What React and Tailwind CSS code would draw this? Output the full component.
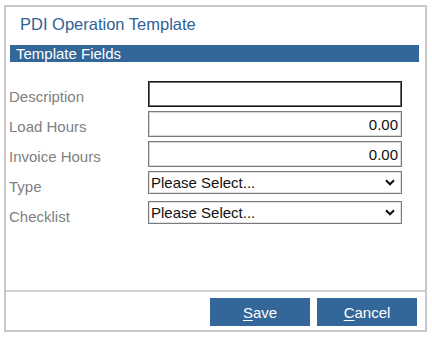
const FONT = { fontFamily: '"Liberation Sans", Arial, sans-serif' };

const FIELDS = [
  { label: 'Description', kind: 'text', value: '', focused: true },
  { label: 'Load Hours', kind: 'text', value: '0.00' },
  { label: 'Invoice Hours', kind: 'text', value: '0.00' },
  { label: 'Type', kind: 'select', value: 'Please Select...' },
  { label: 'Checklist', kind: 'select', value: 'Please Select...' },
];

function Chevron() {
  return (
    <svg width="10" height="7" viewBox="0 0 10 7" className="shrink-0">
      <path d="M1 1.2 L5 5.2 L9 1.2" fill="none" stroke="#111" strokeWidth="2.1" />
    </svg>
  );
}

function Field({ field }) {
  if (field.kind === 'select') {
    return (
      <div className="w-[254px] h-[23px] border border-[#7a7a7a] shadow-[inset_0_0_0_1px_#e2e2e2] flex items-center justify-between pl-[2px] pr-[6px] text-[15px] text-[#111] leading-none">
        <span>{field.value}</span>
        <Chevron />
      </div>
    );
  }
  return (
    <div
      className={`w-[254px] h-[26px] flex items-center justify-end pr-[3px] text-[15px] text-[#111] leading-none ${
        field.focused
          ? 'border border-[#1a1a1a] shadow-[inset_0_0_0_1px_#6a6a6a]'
          : 'border border-[#7a7a7a] shadow-[inset_0_0_0_1px_#d8d8d8]'
      }`}
    >
      {field.value}
    </div>
  );
}

export default function App() {
  return (
    <div className="w-[432px] h-[337px] bg-white pt-[5px] pl-[4px]" style={FONT}>
      <div className="w-[423px] h-[327px] border-2 border-[#c8c8c8] flex flex-col">
        <div className="h-[38px] pt-[7px] pl-[14px] text-[16.5px] leading-[20px] text-[#2f6296]">
          PDI Operation Template
        </div>
        <div className="h-[17px] ml-[4px] mr-[6px] bg-[#336699] pl-[6px] text-[15px] leading-[17px] text-white">
          Template Fields
        </div>

        <div className="mt-[19px] flex flex-col">
          {FIELDS.map((f) => (
            <div key={f.label} className="h-[30px] flex items-start">
              <div className="w-[142px] pl-[3px] pt-[2px] text-[15px] leading-[27px] text-[#808080]">{f.label}</div>
              <Field field={f} />
            </div>
          ))}
        </div>

        <div className="flex-1" />

        <div className="border-t-2 border-[#cfcfcf] pt-[6px] pr-[8px] h-[40px] flex justify-end gap-[7px]">
          <button className="w-[100px] h-[28px] bg-[#336699] text-white text-[15px] leading-none">
            <span className="underline underline-offset-2">S</span>ave
          </button>
          <button className="w-[100px] h-[28px] bg-[#336699] text-white text-[15px] leading-none">
            <span className="underline underline-offset-2">C</span>ancel
          </button>
        </div>
      </div>
    </div>
  );
}
